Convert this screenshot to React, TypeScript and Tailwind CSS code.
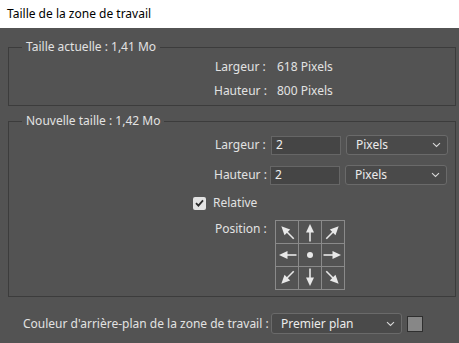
const font = { fontFamily: '"Noto Sans", "Open Sans", sans-serif' };

function Chevron() {
  return (
    <svg width="9" height="6" viewBox="0 0 9 6" className="shrink-0">
      <path d="M1 1.2 L4.5 4.5 L8 1.2" fill="none" stroke="#d8d8d8" strokeWidth="1.1" />
    </svg>
  );
}

function Select({ value, className }: { value: string; className: string }) {
  return (
    <div
      className={`flex items-center justify-between rounded-[3px] border border-[#6a6a6a] bg-[#4a4a4a] pl-[9px] pr-[6px] text-[12px] text-[#ececec] ${className}`}
    >
      <span>{value}</span>
      <Chevron />
    </div>
  );
}

function Arrow({ angle }: { angle: number }) {
  return (
    <svg width="22" height="22" viewBox="0 0 22 22">
      <g transform={`rotate(${angle} 11 11)`}>
        <path d="M11 3 L7 11.5 L15 11.5 Z" fill="#e8e8e8" />
        <line x1="11" y1="10" x2="11" y2="20.5" stroke="#e8e8e8" strokeWidth="1.6" />
      </g>
    </svg>
  );
}

const cells = [-45, 0, 45, -90, null, 90, -135, 180, 135];

function PositionGrid() {
  return (
    <div className="grid grid-cols-[22px_22px_22px] gap-px border border-[#8a8a8a] bg-[#8a8a8a]">
      {cells.map((a, i) => (
        <div key={i} className="flex h-[22px] w-[22px] items-center justify-center bg-[#535353]">
          {a === null ? (
            <div className="h-[6px] w-[6px] rounded-full bg-[#e8e8e8]" />
          ) : (
            <Arrow angle={a} />
          )}
        </div>
      ))}
    </div>
  );
}

function Input({ value }: { value: string }) {
  return (
    <div className="flex h-[19px] w-[70px] items-center border border-[#666] bg-[#454545] pl-[4px] text-[12px] text-[#f0f0f0]">
      {value}
    </div>
  );
}

export default function App() {
  return (
    <div className="h-[343px] w-[459px] overflow-hidden bg-[#535353] text-[12px] leading-4 text-[#e2e2e2]" style={font}>
      <div className="flex h-[28px] items-center bg-white pl-[7px] text-[12px] text-black">
        Taille de la zone de travail
      </div>

      <fieldset className="ml-2 mr-[3px] mt-[11px] border border-[#3c3c3c] pb-[2px]">
        <legend className="ml-[13px] px-[4px] leading-4">Taille actuelle : 1,41 Mo</legend>
        <div className="pl-[206px]">
          <div className="flex h-6 items-center">
            <span className="w-[62px]">Largeur :</span>
            <span>618 Pixels</span>
          </div>
          <div className="flex h-6 items-center">
            <span className="w-[62px] -ml-px">Hauteur :</span>
            <span className="ml-px">800 Pixels</span>
          </div>
        </div>
      </fieldset>

      <fieldset className="ml-2 mr-[3px] mt-[7px] border border-[#3c3c3c] pb-[6px]">
        <legend className="ml-[13px] px-[4px] leading-4">Nouvelle taille : 1,42 Mo</legend>
        <div className="mt-[6px] flex flex-col pl-[206px]">
          <div className="flex items-center">
            <span className="w-[56px]">Largeur :</span>
            <Input value="2" />
            <Select value="Pixels" className="ml-[5px] h-[20px] w-[102px]" />
          </div>
          <div className="mt-[10px] flex items-center">
            <span className="w-[56px] -ml-px pr-[1px]">Hauteur :</span>
            <Input value="2" />
            <Select value="Pixels" className="ml-[5px] h-[20px] w-[102px]" />
          </div>
          <div className="-ml-[22px] mt-[10px] flex h-4 items-center">
            <div className="flex h-[13px] w-[13px] items-center justify-center rounded-[2px] bg-[#e2e2e2]">
              <svg width="9" height="8" viewBox="0 0 9 8">
                <path d="M1 4.2 L3.4 6.6 L8 1.4" fill="none" stroke="#2a2a2a" strokeWidth="1.8" />
              </svg>
            </div>
            <span className="ml-[7px]">Relative</span>
          </div>
          <div className="mt-[9px] flex items-start">
            <span className="w-[60px] pt-px">Position :</span>
            <PositionGrid />
          </div>
        </div>
      </fieldset>

      <div className="ml-[23px] mt-4 flex items-center">
        <span className="w-[248px]">Couleur d'arrière-plan de la zone de travail :</span>
        <Select value="Premier plan" className="h-[21px] w-[131px]" />
        <div className="ml-[5px] h-[16px] w-[16px] border border-[#2f2f2f] bg-[#878787]" />
      </div>
    </div>
  );
}
